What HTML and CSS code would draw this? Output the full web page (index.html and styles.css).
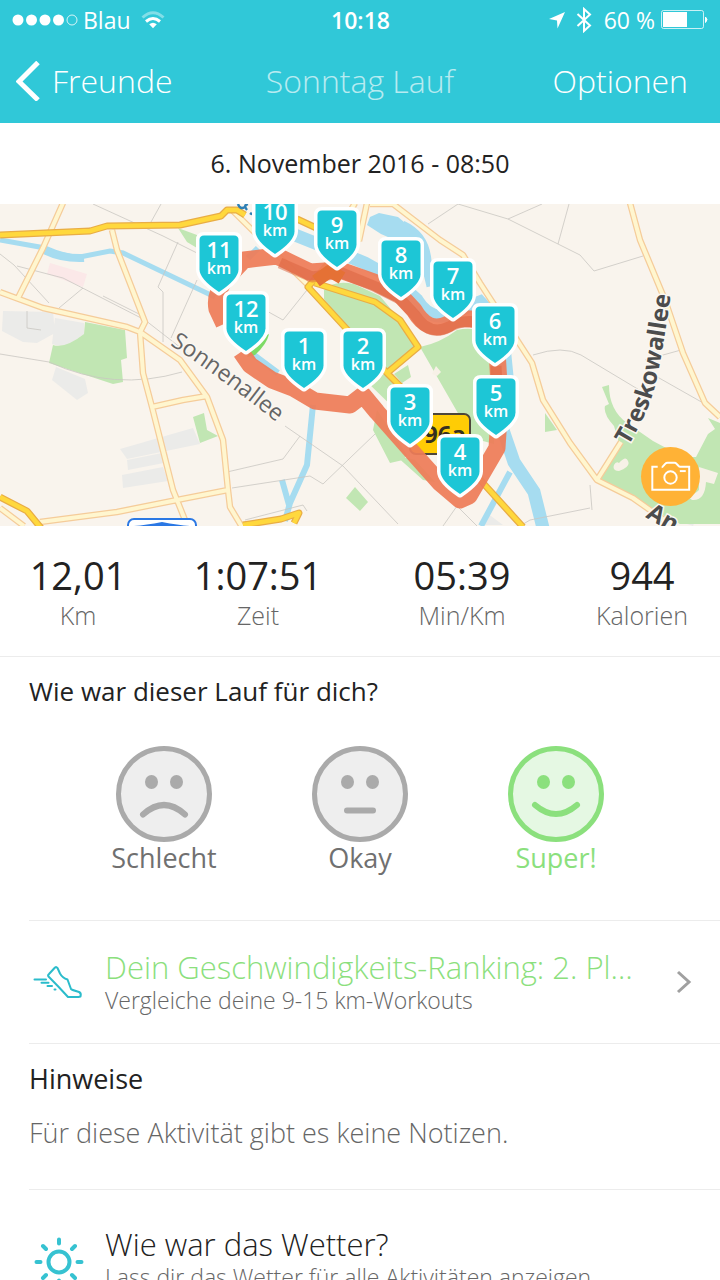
FILE: index.html
```html
<!DOCTYPE html>
<html lang="de">
<head>
<meta charset="utf-8">
<meta name="viewport" content="width=device-width, initial-scale=1">
<title>Sonntag Lauf</title>
<link rel="stylesheet" href="styles.css">
</head>
<body>
<div class="screen">
  <header class="top">
    <div class="status">
      <div class="status-left">
        <svg class="signal" viewBox="0 0 66 12" aria-hidden="true"><g fill="#fff"><circle cx="6" cy="6" r="5.500"/><circle cx="19.500" cy="6" r="5.500"/><circle cx="33" cy="6" r="5.500"/><circle cx="46.500" cy="6" r="5.500"/></g><circle cx="60" cy="6" r="5" fill="none" stroke="#fff" stroke-opacity=".8"/></svg>
        <span>Blau</span>
        <svg class="wifi" viewBox="0 0 24 18" aria-hidden="true"><g fill="none" stroke="#fff" stroke-width="3"><path d="M1.500 6.500Q12-3 22.500 6.500" stroke-opacity=".4"/><path d="M5 10.500q7-6 14 0"/></g><path d="M8.200 13.300q3.800-3 7.600 0L12 17.300z" fill="#fff"/></svg>
      </div>
      <span class="clock">10:18</span>
      <div class="status-right">
        <svg class="locate" viewBox="0 0 18 18" aria-hidden="true"><path d="M17 1 9.500 17.500 9 9.500 1 8z" fill="#fff"/></svg>
        <svg class="bluetooth" viewBox="0 0 16 26" aria-hidden="true"><path d="M1.500 7 14 18.500 8 24V2l6 5.500L1.500 19" fill="none" stroke="#fff" stroke-width="2"/></svg>
        <span class="percent">60 %</span>
        <svg class="battery" viewBox="0 0 48 20" aria-hidden="true"><rect x=".5" y=".5" width="42" height="18" rx="2" fill="none" stroke="#fff" stroke-opacity=".75"/><path d="M2 2h24v15H2z" fill="#fff"/><path d="M44.500 7q3 2.500 0 5.500z" fill="#fff" stroke="#fff"/></svg>
      </div>
    </div>
    <nav class="nav">
      <a class="back" href="#"><svg viewBox="0 0 24 40" aria-hidden="true"><path d="M22 1.500 3 20.500 22 39" fill="none" stroke="#fff" stroke-width="5"/></svg>Freunde</a>
      <h1>Sonntag Lauf</h1>
      <button class="options" type="button">Optionen</button>
    </nav>
  </header>

  <main class="content">
    <p class="date">6. November 2016 - 08:50</p>

    <section class="map" aria-label="Karte">
      <svg class="map-art" viewBox="0 204 720 322">
        <defs>
          <path id="pin" d="M-19.500-56q0-4.500 4.500-4.500h30q4.500 0 4.500 4.500v29.500Q19.500-17 0-4-19.500-17-19.500-26.500z"/>
          <path id="street-a" d="M170 345Q220 377 290 433"/>
          <path id="street-b" d="M628 446Q649 412 656 382T671 292"/>
        </defs>
        <rect y="204" width="720" height="322" fill="#f9f4ed"/>
        <g fill="#ebebe9">
          <path d="M3 311l50 1 2 21-18 10-14-1-21-11zM55 318l29 5v11l-14 10q-10 3-18 0zM56 367l29 12 3 14-11 7-25-20zM120 449l73-21 7 16-73 15zM127 460l40-8 2 10-41 8zM122 475l41-8 5 14-45 7zM487 513l16 12h-22zM677 506l20 10-4 10-18-6z"/>
        </g>
        <path d="M50 263l37 11-4 13-36-13z" fill="#fbe8e8"/>
        <g fill="#c1e6b3">
          <path d="M85 322l40 8 2 28-6 2 2 22-10 2-64-21 4-18q12 4 31-11zM178 228l19 7v13l-10-6zM193 417l11-4 3 17 11 6-18 7z"/>
          <path d="M324 290q10-10 30-6l26 12 20 24 18 27-31 26-44-48-19-26zM365 380l22-7 24 20 10 30-20-8zM394 374l14-9 3 12-9 6zM377 410l30 45-4 5-13 3-17-33zM420 347q20-4 37-17 17-4 27 4l10 40v70l-22-6-17-30zM545 413l12 17-12 2zM355 487l13 15-8 9-14-13zM395 455l20 5 20 22-12-2z"/>
          <path d="M602 387l7-2q0 25 18 38l26 18 30 16h13l12-23 7-5-7-11 12 5v101h-40l-27-14-33-17-23-13 22-37-5-17q-11-12-9-20l4-2z"/>
        </g>
        <path d="M614 465q2-4 5-2 7-8 9-2 3 6-9 10-7 0-5-6zM699 467l19 6-4 11-8-2q-1 19-14 18l-5-4q8-2 12-6v-13zM432 374l4-8 5 6-4 4z" fill="#f7f1e7"/>
        <g fill="none" stroke="#a6dcf0">
          <path d="M0 240l45 8q20 9 35 9l30-6 13 2 92 44" stroke-width="5"/>
          <path d="M44 250q18 9 40 8" stroke-width="8"/>
          <path d="M258 248l-10 10M250 352l28 21M313 405l-6 60-17 38-5 18M282 480l7 25M510 472l-29 54" stroke-width="6"/>
          <path d="M295 235l30 12 40 16 30 17 22 20q12 20 30 15l33-13 22 24 6 60-6 41 12 35 20 30 10 40" stroke-width="13"/>
          <path d="M402 226q22 10 24 35l6 25" stroke-width="11"/>
        </g>
        <path d="M367 225l3-8 9-4 19 4 13 11-2 10-12 3-16-7z" fill="#a6dcf0"/>
        <g fill="none" stroke="#c9c7c2" stroke-width=".8">
          <path d="M0 254l14 11 35 38M17 266l46 12 82 42 45 35M93 204l70 32 40 20M161 204l-10 18M178 242l-20 45 5 5v50M197 280l-26 58M83 288l-24 20M0 354l49 8q65 30 133 10M103 296l40 20M27 311v17l14 2M265 310l18 10 32-40M227 472l56-13 17-23M232 488l78-12 13 8 52-50M285 426l58 40 55 58M428 224l30-20M458 204l50 15 72 36 14 16 49-15M508 219l34-15M558 244l11-40M533 355q30-10 48 0l60 36M645 360l36-10M645 370l60 34M590 485l2 25M520 526l10-6 60-12M443 526l14-20 20 20M245 520l58-15 4 6"/>
        </g>
        <g fill="none" stroke-linejoin="round">
          <path stroke="#f5cc9a" stroke-width="6.500" d="M63 203 43 248 17 300M0 292l43 16 84 19 13 5 40 28 27 37 16 43 5 50 2 17 12 20M112 230l5 20 28 72-5 10 3 41 9 34 21 83 12 30M152 407l31-7 24-4M40 522l77-10 60-12 51-10M0 508l24 18M233 211l77 76M367 203l-8 38M355 203l-7 12M370 204h23l47 36 23 15 17 28 52 80 11 37 27 43 27 37 36 18 34 24M597 480l24-38M630 203l10 37 25 60 18 53 22 50 15 14"/>
          <path stroke="#fff6cf" stroke-width="4" d="M63 203 43 248 17 300M0 292l43 16 84 19 13 5 40 28 27 37 16 43 5 50 2 17 12 20M112 230l5 20 28 72-5 10 3 41 9 34 21 83 12 30M152 407l31-7 24-4M40 522l77-10 60-12 51-10M0 508l24 18M233 211l77 76M367 203l-8 38M355 203l-7 12M370 204h23l47 36 23 15 17 28 52 80 11 37 27 43 27 37 36 18 34 24M597 480l24-38M630 203l10 37 25 60 18 53 22 50 15 14"/>
          <path d="M0 235l90-4 17-5 73-1 41-9 6-6h10l8 5M297 219l30 14M0 497l27 14 14 17M243 525l38-6 18-6-5 10M328 264l-20 23 35 38 44 48 31-26-18-27-25-18-60-19M387 373l20 20 76 90 40 44" stroke="#e9ad45" stroke-width="7"/>
          <path d="M0 235l90-4 17-5 73-1 41-9 6-6h10l8 5M297 219l30 14M0 497l27 14 14 17M243 525l38-6 18-6-5 10M328 264l-20 23 35 38 44 48 31-26-18-27-25-18-60-19M387 373l20 20 76 90 40 44" stroke="#ffd83d" stroke-width="4.500"/>
        </g>
        <g fill="none" stroke="#2f80b5" stroke-width="2.500"><path d="M238 204q2 6 7 3M247 210q-4-5 1-6M250 213q4 3 5-3"/></g>
        <rect x="128" y="519" width="68" height="20" rx="6" fill="#fff" stroke="#2b78e4" stroke-width="2"/>
        <path d="M134 526q12-1 28-4 16 3 28 4z" fill="#2b78e4"/>
        <rect x="410" y="414" width="60" height="40" rx="6" fill="#ffcc05" stroke="#4d463b" stroke-width="2"/>
        <text class="shield-text" x="424" y="443">96a</text>
        <path d="M256 340l13-6q-2 10-14 21l-8 2z" fill="#7edb66"/>
        <g fill="none" stroke-linejoin="round">
          <path d="M241 352l9 13 22 15 21 8 22 13 35 4 13-10 14 17 30 34 33 37 20 17 9-4 28-48 3-47-4-67-19-14q-20-4-29 4-20 10-34-14l-14-15-26-13-34-12-30 2-33-16-33 4-18 19q-12 15-9 30l7 15" stroke="#ee7c58" stroke-width="17" opacity=".93"/>
          <path d="M280 263l32 14 30-4 34 14 24 12 15 16q14 22 34 12 12-7 27-5M496 366l2 40" stroke="#d9623d" stroke-width="11" opacity=".5"/>
          <path d="M316 281l14-10 12 7" stroke="#e57135" stroke-width="13"/>
        </g>
        <text class="street"><textPath href="#street-a">Sonnenallee</textPath></text>
        <text class="street strong"><textPath href="#street-b">Treskowallee</textPath></text>
        <text class="street strong" transform="translate(645 517) rotate(30)">An</text>
        <g class="pins">
          <g transform="translate(275 258)"><use href="#pin"/><text y="-38">10</text><text class="unit" y="-22">km</text></g>
          <g transform="translate(219 296)"><use href="#pin"/><text y="-38">11</text><text class="unit" y="-22">km</text></g>
          <g transform="translate(337 271)"><use href="#pin"/><text y="-38">9</text><text class="unit" y="-22">km</text></g>
          <g transform="translate(401 301)"><use href="#pin"/><text y="-38">8</text><text class="unit" y="-22">km</text></g>
          <g transform="translate(453 322)"><use href="#pin"/><text y="-38">7</text><text class="unit" y="-22">km</text></g>
          <g transform="translate(495 367)"><use href="#pin"/><text y="-38">6</text><text class="unit" y="-22">km</text></g>
          <g transform="translate(246 355)"><use href="#pin"/><text y="-38">12</text><text class="unit" y="-22">km</text></g>
          <g transform="translate(304 392)"><use href="#pin"/><text y="-38">1</text><text class="unit" y="-22">km</text></g>
          <g transform="translate(363 392)"><use href="#pin"/><text y="-38">2</text><text class="unit" y="-22">km</text></g>
          <g transform="translate(410 448)"><use href="#pin"/><text y="-38">3</text><text class="unit" y="-22">km</text></g>
          <g transform="translate(496 439)"><use href="#pin"/><text y="-38">5</text><text class="unit" y="-22">km</text></g>
          <g transform="translate(460 498)"><use href="#pin"/><text y="-38">4</text><text class="unit" y="-22">km</text></g>
        </g>
      </svg>
      <button class="camera" type="button" aria-label="Foto hinzufügen">
        <svg viewBox="0 0 60 60" aria-hidden="true"><g fill="none" stroke="#fff" stroke-width="2"><path d="M17 20h-5.500v23.500h37.500V20H39.500q-1 0-1.500-1l-2-2q-.6-1-2-1h-7q-1.500 0-2.200 1l-2 2q-.6 1.500-1.800 1.500"/><circle cx="30" cy="31" r="6.300"/><path d="M39.500 24.500h6"/></g></svg>
      </button>
    </section>

    <dl class="stats">
      <div><dt>Km</dt><dd>12,01</dd></div>
      <div><dt>Zeit</dt><dd>1:07:51</dd></div>
      <div><dt>Min/Km</dt><dd>05:39</dd></div>
      <div><dt>Kalorien</dt><dd>944</dd></div>
    </dl>

    <fieldset class="mood">
      <legend>Wie war dieser Lauf für dich?</legend>
      <div class="faces">
        <label class="face"><input type="radio" name="mood">
          <svg viewBox="0 0 96 96" aria-hidden="true"><circle class="ring" cx="48" cy="48" r="45.500"/><ellipse class="eye" cx="35.500" cy="36" rx="6.500" ry="7"/><ellipse class="eye" cx="60.500" cy="36" rx="6.500" ry="7"/><path class="mouth" d="M27 68.500q21-19 42 0"/></svg>
          <span>Schlecht</span></label>
        <label class="face"><input type="radio" name="mood">
          <svg viewBox="0 0 96 96" aria-hidden="true"><circle class="ring" cx="48" cy="48" r="45.500"/><ellipse class="eye" cx="35.500" cy="36" rx="6.500" ry="7"/><ellipse class="eye" cx="60.500" cy="36" rx="6.500" ry="7"/><path class="mouth" d="M35 64.500h26"/></svg>
          <span>Okay</span></label>
        <label class="face"><input type="radio" name="mood" checked>
          <svg viewBox="0 0 96 96" aria-hidden="true"><circle class="ring" cx="48" cy="48" r="45.500"/><ellipse class="eye" cx="35.500" cy="36" rx="6.500" ry="7"/><ellipse class="eye" cx="60.500" cy="36" rx="6.500" ry="7"/><path class="mouth" d="M27 59q21 18 42 0"/></svg>
          <span>Super!</span></label>
      </div>
    </fieldset>

    <a class="row ranking" href="#">
      <svg class="row-icon" viewBox="0 0 52 52" aria-hidden="true"><g fill="none" stroke="#2bbccb" stroke-width="2" stroke-linecap="round" stroke-linejoin="round"><path d="M16 18l6-6.500q1.500-1 2.500 .5l2.500 5.500q2.500 4.500 7.500 6l3.500 9.500q1 1 8 3 2.500 1 1.500 4.500l-2 .5H35Q25 30 15.500 20.500q-1-1 .5-2.500z"/><path d="M1.500 23.500H13M8.500 26.800h7M14.500 30h4.500M21.500 33.500h1"/></g></svg>
      <span class="row-text"><span class="row-title">Dein Geschwindigkeits-Ranking: 2. Platz</span><span class="row-sub">Vergleiche deine 9-15 km-Workouts</span></span>
      <svg class="chevron" viewBox="0 0 16 24" aria-hidden="true"><path d="M2 2l11 10L2 22" fill="none" stroke="#a0a0a0" stroke-width="3"/></svg>
    </a>

    <section class="notes">
      <h2>Hinweise</h2>
      <p>Für diese Aktivität gibt es keine Notizen.</p>
    </section>

    <a class="row weather" href="#">
      <svg class="row-icon" viewBox="0 0 52 52" aria-hidden="true"><g fill="none" stroke="#36c2d1" stroke-width="4" stroke-linecap="round"><circle cx="26" cy="26" r="10.500"/><path d="M26 3.500v4M26 44.500v4M3.500 26h4M44.500 26h4M10 10l3 3M39 39l3 3M10 42l3-3M39 13l3-3"/></g></svg>
      <span class="row-text"><span class="row-title">Wie war das Wetter?</span><span class="row-sub">Lass dir das Wetter für alle Aktivitäten anzeigen</span></span>
    </a>
  </main>
</div>
</body>
</html>
```

FILE: styles.css
```css
* { box-sizing: border-box; }

body {
  margin: 0;
  font-family: "Open Sans", "Noto Sans", sans-serif;
  color: #222;
  background: #fff;
}

h1, h2, p, dl, dd { margin: 0; font-weight: 400; }
a { color: inherit; text-decoration: none; }
button { font: inherit; color: inherit; border: 0; padding: 0; background: none; cursor: pointer; }
svg { display: block; flex: none; }

.screen { height: 100vh; display: flex; flex-direction: column; overflow: hidden; }

.top { flex: none; color: #fff; background: #30c8d8; }

.status {
  display: grid;
  grid-template-columns: 1fr auto 1fr;
  align-items: center;
  height: 40px;
  padding: 0 11px 0 12px;
  font-size: 23px;
  line-height: 30px;
}
.status-left, .status-right { display: flex; align-items: center; }
.status-left { gap: 5px; }
.status-right { justify-content: flex-end; gap: 6px; }
.signal { width: 66px; }
.wifi { width: 24px; margin-left: 5px; }
.locate { width: 18px; }
.bluetooth { width: 16px; margin: 0 6px 0 4px; }
.battery { width: 48px; }
.clock { font-weight: 600; }

.nav {
  display: grid;
  grid-template-columns: 1fr auto 1fr;
  align-items: center;
  height: 83px;
  padding: 0 16px 2px;
  font-size: 32px;
  font-weight: 300;
}
.back { display: flex; align-items: center; gap: 12px; }
.back svg { width: 24px; }
.nav h1 { font-size: 32px; font-weight: 300; opacity: .65; }
.options { justify-self: end; padding-right: 16px; font-weight: 300; }

.content { flex: 1; min-height: 0; overflow: hidden; }

.date { height: 81px; font-size: 25px; line-height: 80px; text-align: center; }

.map { position: relative; }
.map-art { width: 100%; height: auto; }
.street { font-size: 23px; font-weight: 500; fill: #666; stroke: #fbf7f1; stroke-width: 3px; paint-order: stroke; }
.strong { font-size: 24px; font-weight: 700; fill: #4c4c4c; }
.shield-text { font-size: 24px; font-weight: 700; fill: #352f20; }
.pins use { fill: #1dc6d6; stroke: #fff; stroke-width: 7px; stroke-linejoin: round; paint-order: stroke; }
.pins text { font-size: 22px; font-weight: 600; fill: #fff; text-anchor: middle; }
.pins .unit { font-size: 16px; }
.camera { position: absolute; right: 20px; bottom: 20px; width: 59px; height: 59px; border-radius: 50%; background: #ffb236; }

.stats {
  display: grid;
  grid-template-columns: 13fr 17fr 17fr 13fr;
  padding: 25px 0;
  border-bottom: 1px solid #ececec;
  text-align: center;
}
.stats div { display: flex; flex-direction: column-reverse; }
.stats dd { font-size: 38px; line-height: 48px; }
.stats dt { font-size: 25px; line-height: 32px; font-weight: 300; color: #666; }

.mood { position: relative; margin: 0; border: 0; padding: 0; min-width: 0; }
.mood legend { padding: 17px 29px 0; font-size: 26px; line-height: 34px; }
.faces { display: grid; grid-template-columns: repeat(3, 1fr); padding: 38px 66px 47px; }
.face { position: relative; display: flex; flex-direction: column; align-items: center; color: #707070; font-size: 27px; line-height: 31px; cursor: pointer; }
.face input { position: absolute; opacity: 0; }
.face svg { width: 96px; }
.ring { fill: #eee; stroke: #aaa; stroke-width: 5px; }
.eye { fill: #aaa; }
.mouth { fill: none; stroke: #aaa; stroke-width: 6px; stroke-linecap: round; }
.face:has(:checked) { color: #8be07d; }
.face:has(:checked) .ring { fill: #e5f8e3; stroke: #8be07d; }
.face:has(:checked) .eye { fill: #8be07d; }
.face:has(:checked) .mouth { stroke: #8be07d; }

.row, .notes { margin-left: 29px; border-top: 1px solid #ececec; }
.row { display: flex; align-items: center; gap: 20px; padding: 0 28px 0 4px; height: 123px; }
.row-icon { width: 52px; }
.row-text { flex: 1; min-width: 0; display: flex; flex-direction: column; padding-bottom: 2px; }
.row-title { font-size: 31px; line-height: 38px; font-weight: 300; overflow: hidden; white-space: nowrap; text-overflow: ellipsis; }
.row-sub { font-size: 23px; line-height: 28px; font-weight: 300; color: #666; white-space: nowrap; }
.ranking .row-title { color: #8be07d; }
.chevron { width: 16px; margin-left: 10px; }

.notes { padding: 18px 0 39px; }
.notes h2 { font-size: 27px; line-height: 34px; }
.notes p { margin-top: 20px; font-size: 27px; line-height: 34px; font-weight: 300; color: #666; }
.weather { padding-top: 22px; }
.weather .row-text { padding-bottom: 8px; }
```
